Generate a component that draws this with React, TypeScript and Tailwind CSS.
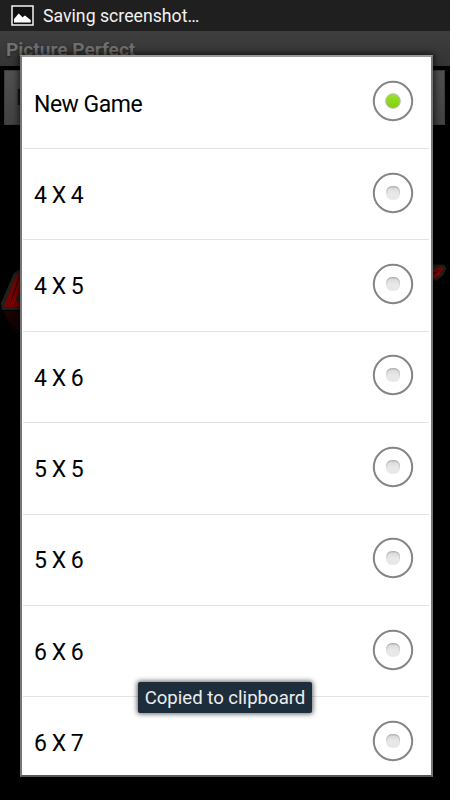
const options = ['New Game', '4 X 4', '4 X 5', '4 X 6', '5 X 5', '5 X 6', '6 X 6', '6 X 7'];

function PictureIcon() {
  return (
    <svg width="23" height="21" viewBox="0 0 23 21" className="shrink-0">
      <rect x="1" y="1" width="21" height="19" fill="#111" stroke="#f5f5f5" strokeWidth="1.5" />
      <path d="M3 17.5V14L7.7 8.5L11.5 12.2L14 10.6L19.7 15V17.5Z" fill="#fff" />
    </svg>
  );
}

function Radio({ checked }: { checked: boolean }) {
  return (
    <svg width="42" height="42" viewBox="0 0 42 42" className="shrink-0">
      <defs>
        <linearGradient id="dotOn" x1="0" y1="0" x2="0" y2="1">
          <stop offset="0" stopColor="#9be32c" />
          <stop offset="1" stopColor="#7fcf12" />
        </linearGradient>
        <linearGradient id="dotOff" x1="0" y1="0" x2="0" y2="1">
          <stop offset="0" stopColor="#d6d6d6" />
          <stop offset="0.5" stopColor="#e8e8e8" />
        </linearGradient>
        <linearGradient id="dotEdge" x1="0" y1="0" x2="0" y2="1">
          <stop offset="0" stopColor="#999999" />
          <stop offset="0.7" stopColor="#e6e6e6" />
        </linearGradient>
      </defs>
      <circle cx="21" cy="21" r="19.2" fill="#fff" stroke="#858585" strokeWidth="2" />
      {checked ? (
        <circle cx="21" cy="21" r="7.3" fill="url(#dotOn)" stroke="#b9bfb2" strokeWidth="1" />
      ) : (
        <rect x="14.8" y="14.8" width="12.6" height="12.4" rx="4.5" fill="url(#dotOff)" stroke="url(#dotEdge)" strokeWidth="1" />
      )}
    </svg>
  );
}

function LogoLeft() {
  return (
    <svg width="22" height="80" viewBox="0 0 22 80" className="block">
      <defs>
        <linearGradient id="reflection" x1="0" y1="0" x2="0" y2="1">
          <stop offset="0" stopColor="#380000" />
          <stop offset="1" stopColor="#000" />
        </linearGradient>
      </defs>
      <path d="M22 6L14 11L1 41L2 48H22Z" fill="#20211c" />
      <path d="M22 10L16 14L4 44L7 45H22V39H15L22 24Z" fill="#780000" />
      <path d="M22 13L18 17L11 41L14 42L22 22Z" fill="#820000" />
      <path d="M19 15L11 40" fill="none" stroke="#2a0000" strokeWidth="1" />
      <path d="M3 49H22V79L15 71Z" fill="url(#reflection)" opacity=".65" />
      <path d="M8 50L20 70M15 50L22 61" stroke="#0b0909" strokeWidth="2" />
    </svg>
  );
}

function LogoRight() {
  return (
    <svg width="18" height="24" viewBox="0 0 18 24" className="block">
      <path d="M0 2H12L14 5L11 12L5 17H0Z" fill="#20211d" stroke="#191a17" />
      <path d="M0 5L4 6L3 10L6 5H11L7 12L3 15H0V12L3 11L0 8Z" fill="#970000" />
      <path d="M0 10L4 10L9 6" fill="none" stroke="#3d0000" />
    </svg>
  );
}

export default function App() {
  return (
    <div className="relative flex h-[800px] w-[450px] flex-col overflow-hidden bg-black font-['Roboto',sans-serif]">
      <header className="flex h-[31px] shrink-0 items-center gap-[9px] bg-[#1f1f1f] pl-[11px] text-[17.7px] text-[#f2f2f2]">
        <PictureIcon />
        <span className="whitespace-nowrap pt-[2px]">Saving screenshot…</span>
      </header>
      <div className="h-[35px] shrink-0 bg-gradient-to-b from-[#3e3e3e] to-[#343434] pl-[6px] pt-[7px] text-[19.1px] font-bold leading-[24px] text-[#707070] [text-shadow:0_1px_2px_#222]">
        Picture Perfect
      </div>
      <div className="ml-[4px] mr-[5px] mt-[4px] h-[55px] shrink-0 border border-[#3c3c3c] bg-gradient-to-b from-[#505050] to-[#424242] pl-[11px] pt-[10px] text-[22px] leading-[33px] text-[#101010]">
        N
      </div>
      <div className="mt-[137px] flex justify-between">
        <LogoLeft />
        <div className="pt-[1px]">
          <LogoRight />
        </div>
      </div>

      {/* Size picker */}
      <div className="absolute left-[20px] top-[55px] h-[722px] w-[413px] overflow-hidden border-2 border-x-[#777] border-b-[#555] border-t-[#999] bg-white shadow-[0_0_7px_1px_rgba(0,0,0,0.75)]">
        <ul className="pl-[1px] pr-[2px] pt-[0.6px]">
          {options.map((label, i) => (
            <li
              key={label}
              className="flex h-[91.4px] items-center justify-between border-b border-[#e3e3e3] pl-[11px] pr-[15px] text-[23px] tracking-[-0.5px] text-black"
            >
              <span className="pt-[4px]">{label}</span>
              <div className="pb-[3px]">
                <Radio checked={i === 0} />
              </div>
            </li>
          ))}
        </ul>
      </div>

      {/* Toast */}
      <div className="absolute left-[138px] top-[682px] flex h-[31px] w-[174px] items-center justify-center whitespace-nowrap rounded-[2px] bg-[#1e2d3c] pt-[2px] text-[18.6px] text-[#ededed] shadow-[0_0_5px_1px_rgba(0,0,0,0.6)]">
        Copied to clipboard
      </div>
    </div>
  );
}
